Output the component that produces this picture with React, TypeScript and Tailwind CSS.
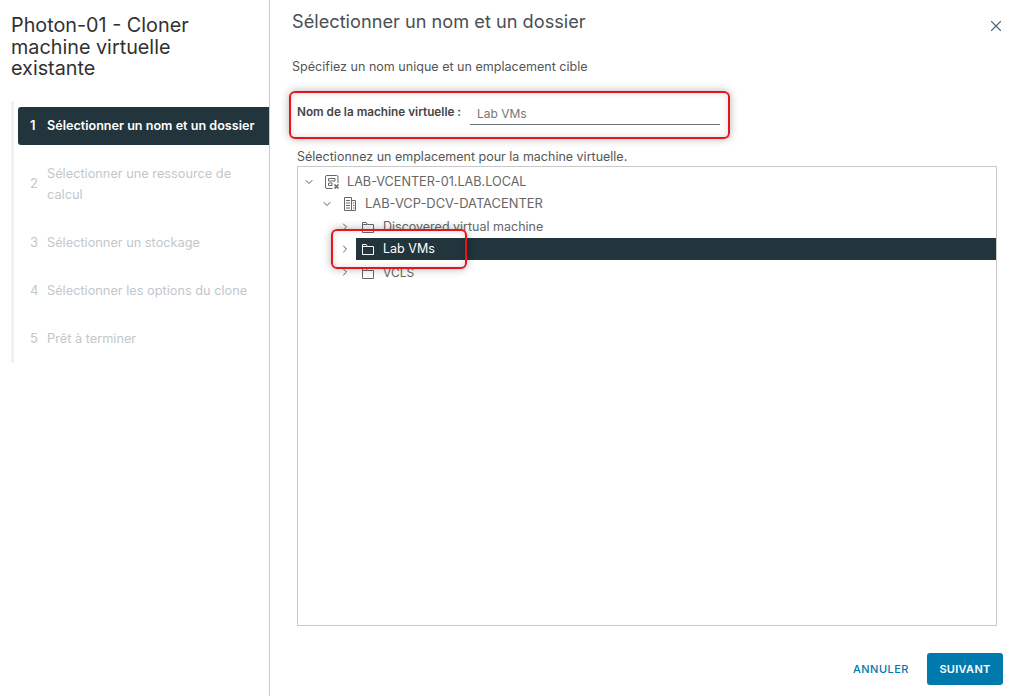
import { ChevronDown, ChevronRight, X } from "lucide-react";

const font = { fontFamily: "Inter, 'Liberation Sans', sans-serif" };

const steps = [
  { n: 1, label: "Sélectionner un nom et un dossier", row: "flex h-[38px] items-center rounded-l-[3px] bg-[#22343c] text-white font-semibold" },
  { n: 2, label: "Sélectionner une ressource de calcul", row: "mt-[8px] flex h-[63px] items-center text-[#c2c7ca]" },
  { n: 3, label: "Sélectionner un stockage", row: "mt-[3px] flex h-[48px] items-center text-[#c2c7ca]" },
  { n: 4, label: "Sélectionner les options du clone", row: "flex h-[48px] items-center text-[#c2c7ca]" },
  { n: 5, label: "Prêt à terminer", row: "flex h-[48px] items-center text-[#c2c7ca]" },
];

function FolderIcon({ className }: { className: string }) {
  return (
    <svg viewBox="0 0 14 14" className={className} fill="none" stroke="currentColor" strokeWidth="1">
      <path d="M1.5 3.5V12.5H12.5V4.5H6.5L5.2 2.5H1.5V4.5H6" />
    </svg>
  );
}

function VcenterIcon() {
  return (
    <svg viewBox="0 0 16 16" className="-mx-px h-4 w-4 shrink-0 text-[#666]" fill="none" stroke="currentColor" strokeWidth="1">
      <path d="M8.5 14.5H3Q1.5 14.5 1.5 13V3Q1.5 1.5 3 1.5H12.5Q14 1.5 14 3V9" />
      <path d="M4.5 4.5H11V7H4.5ZM4.5 9H8V11.5H4.5Z" />
      <path d="M10.5 10.5L14.5 14.5M14.5 10.5L10.5 14.5" strokeWidth="1.6" />
    </svg>
  );
}

function DatacenterIcon() {
  return (
    <svg viewBox="0 0 14 16" className="h-4 w-[14px] shrink-0 text-[#666]" fill="none" stroke="currentColor" strokeWidth="1">
      <path d="M1.5 1.5H8.5V14.5H1.5ZM8.5 4.5H12.5V14.5H8.5Z" />
      <path d="M3 4.5H7M3 7H7M3 9.5H7M3 12H7M10 7H11.5M10 9.5H11.5M10 12H11.5" />
    </svg>
  );
}

function Sidebar() {
  return (
    <aside className="h-full w-[270px] shrink-0 border-r border-[#c4ccd0] pl-[11px] pt-[15px]">
      <h1 className="w-[200px] text-[19.8px] leading-[21.5px] text-[#313131]">Photon-01 - Cloner machine virtuelle existante</h1>
      <ol className="mt-[21px] flex h-[262px] flex-col border-l-[3px] border-[#eef3f5] pl-1 pt-[6px]">
        {steps.map((s) => (
          <li key={s.n} className={s.row}>
            <span className="w-[29px] shrink-0 pl-3 text-[13px]">{s.n}</span>
            <span className={s.n === 1 ? "whitespace-nowrap text-[12.6px] leading-[21px]" : "w-[205px] text-[12.75px] leading-[21px]"}>{s.label}</span>
          </li>
        ))}
      </ol>
    </aside>
  );
}

function TreeRow({ indent, open, selected, icon, label, className, text }: { indent: string; open?: boolean; selected?: boolean; icon: React.ReactNode; label: string; className: string; text: string }) {
  return (
    <div className={`flex ${indent} ${className}`}>
      {open ? (
        <ChevronDown className="h-3 w-3 shrink-0 self-center text-[#444]" strokeWidth={1.75} />
      ) : (
        <ChevronRight className="h-3 w-3 shrink-0 self-center text-[#444]" strokeWidth={1.75} />
      )}
      <div className={selected ? "ml-[5px] flex h-[22px] flex-1 items-center gap-2 self-end bg-[#22343c] pl-[5px] text-white" : "ml-[5px] flex h-[22px] flex-1 items-center gap-2 self-end pl-[5px] text-[#666]"}>
        {icon}
        <span className={`whitespace-nowrap ${text}`}>{label}</span>
      </div>
    </div>
  );
}

export default function App() {
  return (
    <div className="relative flex h-[696px] w-[1017px] overflow-hidden bg-white" style={font}>
      <Sidebar />
      <main className="flex h-full min-w-0 flex-1 flex-col pl-[22px] pr-[14px]">
        <div className="flex h-[44px] items-start justify-between pt-[10px]">
          <h2 className="text-[18.2px] leading-[22px] text-[#4a4f52]">Sélectionner un nom et un dossier</h2>
          <X className="mt-[7px] mr-[-2px] h-[18px] w-[18px] text-[#4d6570]" strokeWidth={1.5} />
        </div>
        <p className="mt-[14px] text-[12.55px] leading-[18px] text-[#565656]">Spécifiez un nom unique et un emplacement cible</p>
        <div className="mt-[25px] flex h-[24px] items-center pl-[5px]">
          <label className="w-[173px] shrink-0 whitespace-nowrap text-[11.75px] font-semibold text-[#454545]">Nom de la machine virtuelle :</label>
          <div className="flex h-[24px] w-[250px] items-center border-b border-[#6b7478] pl-[7px] pt-[3px] text-[12px] text-[#777]">Lab VMs</div>
        </div>
        <p className="ml-[5px] mt-[23px] text-[12.5px] leading-[18px] text-[#565656]">Sélectionnez un emplacement pour la machine virtuelle.</p>
        <div className="ml-[5px] mr-[6px] h-[460px] border border-[#c9c9c9] pt-[4px]">
          <TreeRow indent="pl-[5px]" className="h-[22px]" text="text-[12.65px]" open icon={<VcenterIcon />} label="LAB-VCENTER-01.LAB.LOCAL" />
          <TreeRow indent="pl-[23px]" className="h-[22px]" text="text-[12.9px]" open icon={<DatacenterIcon />} label="LAB-VCP-DCV-DATACENTER" />
          <TreeRow indent="pl-[41px]" className="h-[23px]" text="text-[12.5px]" icon={<FolderIcon className="h-[14px] w-[14px] shrink-0" />} label="Discovered virtual machine" />
          <TreeRow indent="pl-[41px]" className="h-[22px]" text="text-[12.5px]" selected icon={<FolderIcon className="h-[14px] w-[14px] shrink-0" />} label="Lab VMs" />
          <TreeRow indent="pl-[41px]" className="h-[24px]" text="text-[12px]" icon={<FolderIcon className="h-[14px] w-[14px] shrink-0" />} label="VCLS" />
        </div>
        <div className="mt-[27px] flex items-center justify-end gap-[18px]">
          <button className="text-[11px] font-medium tracking-[0.5px] text-[#0079ad]">ANNULER</button>
          <button className="h-[32px] w-[76px] rounded-[3px] bg-[#0079ad] text-[11px] font-semibold tracking-[0.3px] text-white">SUIVANT</button>
        </div>
      </main>
      <div className="absolute left-[289px] top-[91px] h-[48px] w-[441px] rounded-[6px] border-2 border-[#e8141c] shadow-[0_0_8px_rgba(0,0,0,0.3),inset_0_0_6px_rgba(0,0,0,0.15)]" />
      <div className="absolute left-[331px] top-[229px] h-[40px] w-[136px] rounded-[6px] border-2 border-[#e8141c] shadow-[0_0_8px_rgba(0,0,0,0.3),inset_0_0_6px_rgba(0,0,0,0.15)]" />
    </div>
  );
}
